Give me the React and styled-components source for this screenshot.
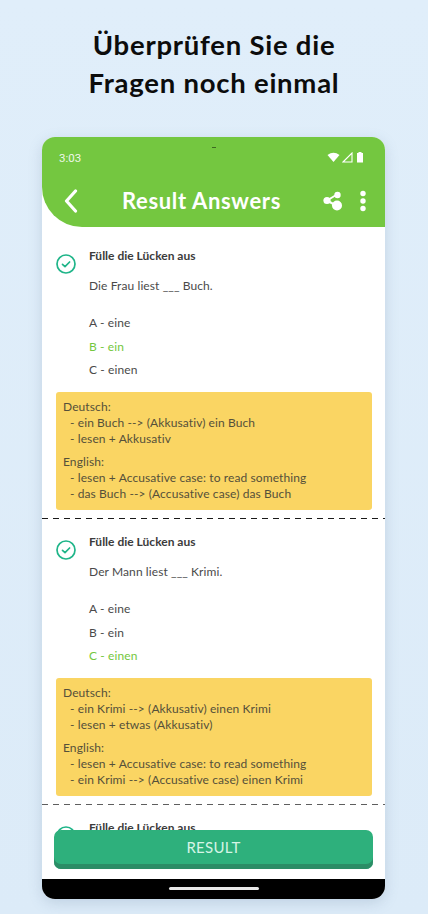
import React from "react";
import styled, { createGlobalStyle } from "styled-components";

const Global = createGlobalStyle`
  html, body { margin: 0; padding: 0; width: 428px; height: 914px; overflow: hidden; }
  body { background: linear-gradient(180deg, #e0eefa 0%, #dcebf8 100%); font-family: "Lato", "Noto Sans", sans-serif; }
`;
const Page = styled.div`
  width: 428px; height: 914px; display: flex; flex-direction: column; align-items: flex-start; overflow: hidden;
`;
const Heading = styled.h1`
  margin: 26px 0 0; height: 111px; width: 428px; font-size: 27.5px; line-height: 38px; font-weight: 700; color: #0c0c0c; text-align: center; letter-spacing: 0.75px;
`;
const Phone = styled.div`
  position: relative; width: 343px; height: 762px; margin-left: 42px; border-radius: 13px; overflow: hidden; background: #fff;
  display: flex; flex-direction: column; box-shadow: 0 4px 14px rgba(90, 120, 150, 0.22);
`;
const Header = styled.header`
  height: 90px; flex: none; background: #74c740; border-radius: 0 0 0 40px; color: #fff; padding: 0 18px 0 17px; box-sizing: border-box;
  display: flex; flex-direction: column; position: relative;
`;
const Status = styled.div`
  height: 41px; display: flex; align-items: flex-start; justify-content: space-between; font-size: 11.5px; line-height: 15px; color: #eef8e8;
  font-family: "Roboto", sans-serif; padding-top: 14px; box-sizing: border-box; padding-right: 2px;
`;
const StatusIcons = styled.div`display: flex; align-items: center; gap: 2px;`;
const Notch = styled.span`position: absolute; top: 10px; left: 170px; width: 4px; height: 1px; background: #3d6a22;`;
const Bar = styled.div`display: flex; align-items: center; height: 40px; margin-top: 3px;`;
const Back = styled.div`width: 63px; padding-left: 5px; box-sizing: border-box; display: flex; align-items: center; flex: none;`;
const Title = styled.div`flex: 1; font-size: 22px; font-weight: 700; line-height: 28px; letter-spacing: 0.65px; white-space: nowrap;`;
const Actions = styled.div`display: flex; align-items: center; gap: 15px;`;
const Scroll = styled.main`flex: 1; min-height: 0; overflow: hidden; position: relative; padding-top: 1px;`;
const Question = styled.section`
  height: 286px; box-sizing: border-box; padding: 0 13px 0 14px; position: relative;
  &::after {
    content: ""; position: absolute; left: 0; right: 0; bottom: -5px; height: 1px; opacity: ${p => p.$faint ? 0.7 : 1};
    background: repeating-linear-gradient(90deg, #1a1a1a 0 6px, transparent 6px 11px);
  }
`;
const QHead = styled.div`display: flex; padding-top: 21px; height: 51px; box-sizing: border-box;`;
const Check = styled.div`width: 33px; flex: none; padding-top: 5px;`;
const QTitle = styled.div`font-size: 12px; line-height: 14px; font-weight: 700; color: #3c3c3c;`;
const Prompt = styled.div`font-size: 12px; line-height: 14px; letter-spacing: 0.1px; color: #4a4a4a; margin-left: 33px;`;
const Options = styled.div`display: flex; flex-direction: column; gap: 9.6px; margin: 23px 0 0 33px;`;
const Option = styled.div`font-size: 12px; line-height: 14px; letter-spacing: 0.1px; color: ${p => p.$ok ? "#74c740" : "#4a4a4a"};`;
const Note = styled.div`
  margin-top: 15px; background: #fad563; border-radius: 3px; height: 118px; box-sizing: border-box; padding: 7px 7px; color: #55503a; font-size: 12px; line-height: 16px; letter-spacing: 0.1px;
`;
const NoteBlock = styled.div`& + & { margin-top: 7px; }`;
const NoteLine = styled.div`padding-left: ${p => p.$in ? "7px" : "0"}; white-space: nowrap;`;
const Nav = styled.div`height: 20px; flex: none; background: #000; display: flex; align-items: center; justify-content: center;`;
const Pill = styled.span`width: 90px; height: 3px; border-radius: 2px; background: #e8e8e8; margin-bottom: 1px;`;
const ResultButton = styled.button`
  position: absolute; left: 12px; top: 693px; width: 319px; height: 39px; border: 0; border-radius: 7px; background: #2eb07c;
  box-shadow: inset 0 -5px 0 #2b8d66; color: #d6f5e6; font: 400 15px/34px "Lato", sans-serif; padding: 0 0 5px; letter-spacing: 0.3px;
`;

const CheckIcon = () => (
  <svg width="20" height="20" viewBox="0 0 20 20" fill="none" stroke="#1fb589" strokeWidth="1.7" strokeLinecap="round" strokeLinejoin="round">
    <circle cx="10" cy="10" r="9" />
    <path d="M6.5 10.3 L9 12.6 L13.6 8" />
  </svg>
);

const data = [
  { prompt: "Die Frau liest ___ Buch.", right: 1, de: ["- ein Buch --> (Akkusativ) ein Buch", "- lesen + Akkusativ"], en: ["- lesen + Accusative case: to read something", "- das Buch --> (Accusative case) das Buch"] },
  { prompt: "Der Mann liest ___ Krimi.", right: 2, de: ["- ein Krimi --> (Akkusativ) einen Krimi", "- lesen + etwas (Akkusativ)"], en: ["- lesen + Accusative case: to read something", "- ein Krimi --> (Accusative case) einen Krimi"] },
];
const choices = ["A - eine", "B - ein", "C - einen"];

export default function App() {
  return (
    <Page>
      <Global />
      <Heading>Überprüfen Sie die<br />Fragen noch einmal</Heading>
      <Phone>
        <Header>
          <Notch />
          <Status>
            <span>3:03</span>
            <StatusIcons>
              <svg width="13" height="11" viewBox="0 0 13 11"><path d="M0.5 3 Q6.5 -1.5 12.5 3 L6.5 10 Z" fill="#fff" /></svg>
              <svg width="11" height="11" viewBox="0 0 11 11"><path d="M1 10 L10 1 V10 Z" fill="none" stroke="#fff" strokeWidth="1.1" /></svg>
              <svg width="10" height="12" viewBox="0 0 10 12"><path d="M2 2 H3.5 V1 H6.5 V2 H8 V11.5 H2 Z" fill="#fff" /></svg>
            </StatusIcons>
          </Status>
          <Bar>
            <Back>
              <svg width="14" height="24" viewBox="0 0 14 24" fill="none" stroke="#fff" strokeWidth="3.2" strokeLinecap="round" strokeLinejoin="round"><path d="M11.5 2 L2.5 12 L11.5 22" /></svg>
            </Back>
            <Title>Result Answers</Title>
            <Actions>
              <svg width="22" height="22" viewBox="0 0 22 22" fill="#fff" stroke="#fff">
                <path d="M5 10.5 L15 4.5 M5 10.5 L15 16" strokeWidth="2" />
                <circle cx="5" cy="10.5" r="3.6" stroke="none" />
                <circle cx="15.5" cy="5" r="3.2" stroke="none" />
                <circle cx="15" cy="15.5" r="5" stroke="none" />
              </svg>
              <svg width="8" height="22" viewBox="0 0 8 22" fill="#fff"><circle cx="4" cy="3.5" r="2.7" /><circle cx="4" cy="11" r="2.7" /><circle cx="4" cy="18.5" r="2.7" /></svg>
            </Actions>
          </Bar>
        </Header>
        <Scroll>
          {data.map((q, i) => (
            <Question key={i} $faint={i === 1}>
              <QHead>
                <Check><CheckIcon /></Check>
                <QTitle>Fülle die Lücken aus</QTitle>
              </QHead>
              <Prompt>{q.prompt}</Prompt>
              <Options>
                {choices.map((o, k) => <Option key={k} $ok={k === q.right}>{o}</Option>)}
              </Options>
              <Note>
                <NoteBlock>
                  <NoteLine>Deutsch:</NoteLine>
                  {q.de.map((l) => <NoteLine key={l} $in>{l}</NoteLine>)}
                </NoteBlock>
                <NoteBlock>
                  <NoteLine>English:</NoteLine>
                  {q.en.map((l) => <NoteLine key={l} $in>{l}</NoteLine>)}
                </NoteBlock>
              </Note>
            </Question>
          ))}
          <Question>
            <QHead>
              <Check><CheckIcon /></Check>
              <QTitle>Fülle die Lücken aus</QTitle>
            </QHead>
          </Question>
        </Scroll>
        <ResultButton>RESULT</ResultButton>
        <Nav><Pill /></Nav>
      </Phone>
    </Page>
  );
}
